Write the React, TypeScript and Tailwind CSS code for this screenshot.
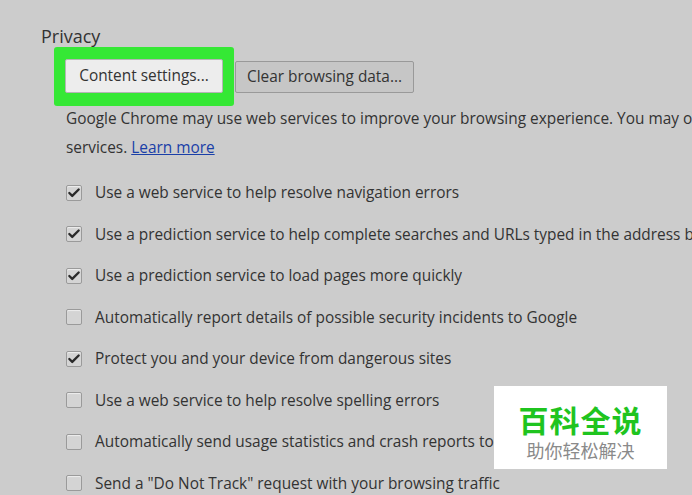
import { Check } from "lucide-react";

const rows = [
  { checked: true, label: "Use a web service to help resolve navigation errors" },
  { checked: true, label: "Use a prediction service to help complete searches and URLs typed in the address bar" },
  { checked: true, label: "Use a prediction service to load pages more quickly" },
  { checked: false, label: "Automatically report details of possible security incidents to Google" },
  { checked: true, label: "Protect you and your device from dangerous sites" },
  { checked: false, label: "Use a web service to help resolve spelling errors" },
  { checked: false, label: "Automatically send usage statistics and crash reports to Google" },
  { checked: false, label: 'Send a "Do Not Track" request with your browsing traffic' },
];

function Box({ checked }: { checked: boolean }) {
  return (
    <span className="flex h-[16px] w-[16px] shrink-0 items-center justify-center rounded-[2px] border border-[#9a9a9a] bg-[#d4d4d4] shadow-[inset_0_1px_1px_rgba(255,255,255,0.6)]">
      {checked && <Check size={14} strokeWidth={4} className="text-[#2a2a2a]" />}
    </span>
  );
}

export default function App() {
  return (
    <div className="relative h-[495px] w-[692px] overflow-hidden bg-[#cccccc] text-[#333] [font-family:'Open_Sans','Noto_Sans',sans-serif]">
      <div className="pl-[41px] pt-[24px]">
        <h2 className="text-[18px] leading-[24px] text-[#333]">Privacy</h2>
        <div className="ml-[13px] mt-[-1px] flex items-center">
          <div className="rounded-[3px] bg-[#35e835] px-[11px] pb-[13px] pt-[12px]">
            <button className="h-[34px] w-[158px] rounded-[2px] border border-[#b5b5b5] bg-[#ededed] text-[15.4px] text-[#333]">
              Content settings...
            </button>
          </div>
          <button className="ml-[1px] h-[32px] w-[179px] rounded-[2px] border border-[#999] bg-[#c6c6c6] text-[15.4px] text-[#333]">
            Clear browsing data...
          </button>
        </div>
        <p className="-mt-[2px] whitespace-nowrap pl-[25px] text-[15.4px] leading-[29px]">
          Google Chrome may use web services to improve your browsing experience. You may optionally disable these
          <br />
          services. <a className="text-[#1a3fa8] underline">Learn more</a>
        </p>
        <div className="mt-[10px] flex flex-col pl-[25px]">
          {rows.map((r) => (
            <div key={r.label} className="flex h-[41.5px] items-center gap-[13px] whitespace-nowrap text-[15.4px]">
              <Box checked={r.checked} />
              <span>{r.label}</span>
            </div>
          ))}
        </div>
      </div>
      <div className="absolute left-[494px] top-[386px] flex h-[83px] w-[173px] flex-col items-center bg-white pt-[17px]">
        <div className="text-[30px] font-bold leading-[32px] tracking-[1px] text-[#1fc41f] [font-family:'Noto_Sans_CJK_SC',sans-serif]">百科全说</div>
        <div className="mt-[5px] text-[18px] leading-[20px] text-[#8a8a8a] [font-family:'Noto_Sans_CJK_SC',sans-serif]">助你轻松解决</div>
      </div>
    </div>
  );
}
